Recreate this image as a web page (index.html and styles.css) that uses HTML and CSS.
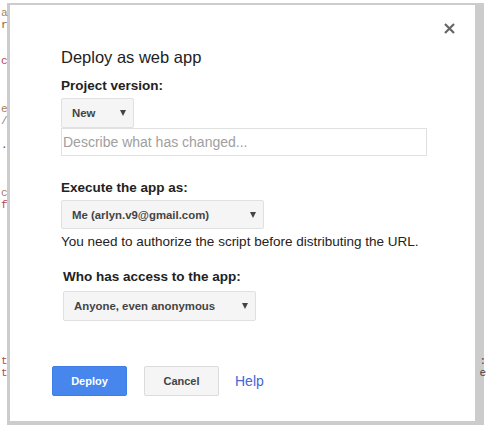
FILE: index.html
```html
<!DOCTYPE html>
<html lang="en">
<head>
    <meta charset="UTF-8">
    <meta name="viewport" content="width=device-width, initial-scale=1.0">
    <title>Deploy as web app</title>
    <link rel="stylesheet" href="styles.css">
</head>
<body>
    <pre class="code">

<span class="tan">a</span>
<span class="brown">r</span>


<span class="rose">c</span>



<span class="tan">e</span>
<span class="gray">/</span>

<span class="dark">.</span>



<span class="tan">c</span>
<span class="rose">f</span>












<span class="rose">t</span>
<span class="rose">t</span></pre>

    <pre class="code code-right">






























<span class="dark">:</span>
<span class="dark">e</span></pre>

    <div class="dialog">
        <div class="dialog-top">
            <button class="close" title="Close">
                <svg width="11" height="11" viewBox="0 0 11 11"><path d="M1 1L10 10M10 1L1 10" stroke="#666" stroke-width="2.2"/></svg>
            </button>
        </div>

        <form class="deploy-form">
            <h2>Deploy as web app</h2>

            <label class="label">Project version:</label>
            <div class="select select-version">
                <span>New</span>
                <svg class="arrow" width="6" height="6" viewBox="0 0 6 6"><polygon points="0,0 6,0 3,6" fill="#444"/></svg>
            </div>
            <input class="describe" type="text" placeholder="Describe what has changed...">

            <label class="label section">Execute the app as:</label>
            <div class="select select-user">
                <span>Me (arlyn.v9@gmail.com)</span>
                <svg class="arrow" width="6" height="6" viewBox="0 0 6 6"><polygon points="0,0 6,0 3,6" fill="#444"/></svg>
            </div>
            <p class="note">You need to authorize the script before distributing the URL.</p>

            <div class="access">
                <label class="label">Who has access to the app:</label>
                <div class="select select-access">
                    <span>Anyone, even anonymous</span>
                    <svg class="arrow" width="6" height="6" viewBox="0 0 6 6"><polygon points="0,0 6,0 3,6" fill="#444"/></svg>
                </div>
            </div>
        </form>

        <div class="actions">
            <button class="btn btn-primary" type="button">Deploy</button>
            <button class="btn" type="button">Cancel</button>
            <a class="help" href="#">Help</a>
        </div>
    </div>
</body>
</html>
```

FILE: styles.css
```css
body {
    margin: 0;
    font-family: "Liberation Sans", Arial, sans-serif;
    background: #fff;
    overflow: hidden;
    height: 427px;
}

/* editor text behind the dialog */
.code {
    margin: -5px 0 0 1px;
    font-family: "Liberation Mono", monospace;
    font-size: 11px;
    line-height: 12px;
}
.code-right {
    position: absolute;
    top: 0;
    right: 2px;
    margin: -5px 0 0;
    text-align: right;
}
.tan { color: #a67f59; }
.brown { color: #8a5a44; }
.rose { color: #b5494d; }
.gray { color: #8a8a8a; }
.dark { color: #555; }

.dialog {
    position: absolute;
    left: 7px;
    top: 3px;
    width: 423px;
    height: 416px;
    background: #fff;
    background-clip: padding-box;
    border-style: solid;
    border-color: rgba(0, 0, 0, 0.2);
    border-width: 2px 9px 4px 3px;
    padding: 0 0 0 42px;
    display: flex;
    flex-direction: column;
}
.dialog-top {
    display: flex;
    justify-content: flex-end;
    padding: 18px 20px 0 0;
    height: 11px;
}
.close {
    border: none;
    background: none;
    padding: 0;
    width: 11px;
    height: 11px;
    cursor: pointer;
    display: block;
}
.close svg {
    display: block;
}

.deploy-form {
    margin: 13px 0 0 9px;
    display: flex;
    flex-direction: column;
    align-items: flex-start;
    color: #222;
}
h2 {
    margin: 0 0 11px;
    font-size: 16.5px;
    line-height: 20px;
    font-weight: normal;
}
.label {
    display: block;
    font-size: 13.5px;
    line-height: 16px;
    font-weight: bold;
    margin-bottom: 4px;
}
.label.section {
    margin-top: 24px;
}
.select {
    display: flex;
    align-items: center;
    justify-content: space-between;
    box-sizing: border-box;
    height: 30px;
    padding: 0 7px 0 10px;
    background: #f5f5f5;
    border: 1px solid #e0e0e0;
    border-radius: 2px;
    font-size: 11.4px;
    font-weight: bold;
    color: #444;
}
.select-version {
    width: 73px;
}
.select-user {
    width: 203px;
    height: 29px;
}
.select-access {
    width: 193px;
}
.describe {
    box-sizing: border-box;
    width: 366px;
    height: 28px;
    margin: 0;
    padding: 0 1px;
    border: 1px solid #e0e0e0;
    font-family: "Liberation Sans", Arial, sans-serif;
    font-size: 14px;
    color: #222;
}
.describe::placeholder {
    color: #a0a0a0;
}
.note {
    margin: 5px 0 0;
    font-size: 13.5px;
    line-height: 16px;
}
.access {
    margin: 19px 0 0 2px;
}
.access .label {
    margin-bottom: 6px;
}

.actions {
    display: flex;
    align-items: center;
    margin-top: 45px;
}
.btn {
    box-sizing: border-box;
    width: 75px;
    height: 30px;
    margin-right: 17px;
    border: 1px solid #dcdcdc;
    border-radius: 2px;
    background: #f5f5f5;
    color: #444;
    font-family: "Liberation Sans", Arial, sans-serif;
    font-size: 11px;
    font-weight: bold;
    cursor: pointer;
}
.btn-primary {
    background: #4787ed;
    border-color: #3f7ee6;
    color: #fff;
}
.help {
    margin-left: -1px;
    font-size: 14px;
    color: #4466d6;
    text-decoration: none;
}
```
